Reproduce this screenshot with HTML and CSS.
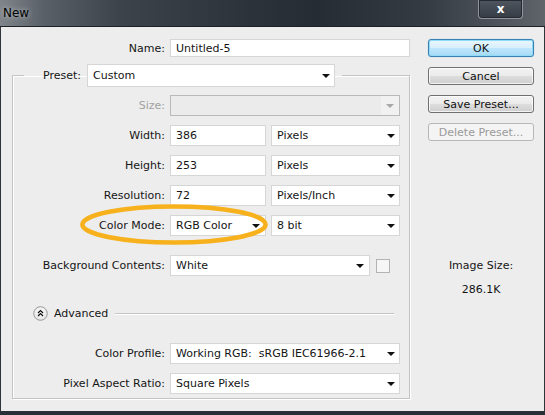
FILE: index.html
```html
<!DOCTYPE html>
<html>
<head>
<meta charset="utf-8">
<title>New</title>
<link rel="stylesheet" href="styles.css">
</head>
<body>
<div class="window">
  <div class="titlebar">
    <span class="title">New</span>
    <div class="close">x</div>
  </div>
  <div class="dialog">
    <div class="main">
      <div class="row name-row">
        <span class="lbl">Name:</span>
        <span class="field name-field">Untitled-5</span>
      </div>
      <fieldset class="group">
        <legend class="preset">
          <span class="preset-lbl">Preset:</span>
          <span class="select preset-sel">Custom<span class="arrow"></span></span>
        </legend>
        <div class="row first">
          <span class="lbl disabled-text">Size:</span>
          <span class="select size-sel disabled"><span class="arrow-box"><span class="arrow grey"></span></span></span>
        </div>
        <div class="row">
          <span class="lbl">Width:</span>
          <span class="field num">386</span>
          <span class="select unit">Pixels<span class="arrow"></span></span>
        </div>
        <div class="row">
          <span class="lbl">Height:</span>
          <span class="field num">253</span>
          <span class="select unit">Pixels<span class="arrow"></span></span>
        </div>
        <div class="row">
          <span class="lbl">Resolution:</span>
          <span class="field num">72</span>
          <span class="select unit">Pixels/Inch<span class="arrow"></span></span>
        </div>
        <div class="row mode-row">
          <span class="lbl">Color Mode:</span>
          <span class="select num">RGB Color<span class="arrow"></span></span>
          <span class="select unit">8 bit<span class="arrow"></span></span>
          <svg class="highlight" width="188" height="42" viewBox="0 0 188 42">
            <ellipse cx="94" cy="20.5" rx="91.6" ry="18" fill="none" stroke="#f6b11c" stroke-width="4.6"/>
          </svg>
        </div>
        <div class="row bg-row">
          <span class="lbl">Background Contents:</span>
          <span class="select bg-sel">White<span class="arrow"></span></span>
          <span class="checkbox"></span>
        </div>
        <div class="advanced">
          <svg class="adv-icon" width="15" height="15" viewBox="0 0 15 15">
            <defs>
              <radialGradient id="g" cx="0.5" cy="0.4" r="0.6">
                <stop offset="0" stop-color="#ffffff"/>
                <stop offset="1" stop-color="#e2e2e2"/>
              </radialGradient>
            </defs>
            <circle cx="7.5" cy="7.5" r="6.8" fill="url(#g)" stroke="#9a9a9a" stroke-width="1"/>
            <path d="M5 7 L7.5 4.6 L10 7 M5 10 L7.5 7.6 L10 10" fill="none" stroke="#111" stroke-width="1.3"/>
          </svg>
          <span class="adv-text">Advanced</span>
          <span class="adv-line"></span>
        </div>
        <div class="row profile-row">
          <span class="lbl">Color Profile:</span>
          <span class="select long">Working RGB:&nbsp; sRGB IEC61966-2.1<span class="arrow"></span></span>
        </div>
        <div class="row">
          <span class="lbl">Pixel Aspect Ratio:</span>
          <span class="select long">Square Pixels<span class="arrow"></span></span>
        </div>
      </fieldset>
    </div>
    <div class="side">
      <div class="btn default">OK</div>
      <div class="btn">Cancel</div>
      <div class="btn">Save Preset...</div>
      <div class="btn disabled">Delete Preset...</div>
      <div class="size-label">Image Size:</div>
      <div class="size-value">286.1K</div>
    </div>
  </div>
</div>
</body>
</html>
```
FILE: styles.css
```css
* { box-sizing: border-box; }
html, body { margin: 0; padding: 0; }
body {
  width: 545px;
  height: 415px;
  overflow: hidden;
  font-family: "DejaVu Sans", Tahoma, sans-serif;
  font-size: 11px;
  color: #151515;
  background: #ededed;
}
.window {
  width: 545px;
  height: 415px;
  display: flex;
  flex-direction: column;
}
.titlebar {
  height: 27px;
  flex: none;
  display: flex;
  align-items: flex-start;
  background: linear-gradient(90deg, #80858b 0%, #5a6067 8%, #3c434b 22%, #2c333b 45%, #262c33 58%, #353b43 78%, #50555c 92%, #5f646a 100%);
  border-bottom: 1px solid #1d2126;
}
.title {
  padding: 6px 0 0 3px;
  font-size: 12px;
  color: #000;
  text-shadow: 0 0 5px rgba(220, 225, 230, 0.9);
}
.close {
  margin-left: auto;
  margin-right: 22px;
  width: 45px;
  height: 19px;
  border: 1px solid #8f959b;
  border-top: none;
  border-radius: 0 0 4px 4px;
  background: linear-gradient(#505660, #363c44);
  box-shadow: inset 0 0 0 1px #252a30;
  color: #fff;
  font-weight: bold;
  font-size: 12px;
  display: flex;
  align-items: center;
  justify-content: center;
  padding-bottom: 1px;
}
.dialog {
  flex: 1;
  display: flex;
  align-items: flex-start;
  border-left: 1px solid #30353b;
  border-right: 1px solid #30353b;
  border-bottom: 4px solid #2a2f35;
  padding-top: 12px;
}
.main {
  width: 408px;
  flex: none;
}
.row {
  display: flex;
  align-items: center;
  height: 21px;
  position: relative;
}
.lbl {
  width: 169px;
  flex: none;
  text-align: right;
  padding-right: 5px;
  white-space: nowrap;
}
.name-row { height: 18px; }
.field, .select {
  height: 100%;
  background: #fff;
  border: 1px solid #d6d6d6;
  display: flex;
  align-items: center;
  padding-left: 5px;
  white-space: nowrap;
  position: relative;
  flex: none;
}
.name-field { width: 240px; }
.group {
  margin: 7px 0 0 11px;
  padding: 0 0 4px 0;
  width: 398px;
  border: 1px solid #c4c4c4;
  box-shadow: 1px 1px 0 #fff, inset 1px 1px 0 #fff;
  min-width: 0;
}
.preset {
  margin-left: 11px;
  padding: 0 7px 0 19px;
  display: flex;
  align-items: center;
  height: 23px;
}
.preset-lbl {
  width: 44px;
  flex: none;
}
.preset-sel {
  width: 248px;
}
.group .lbl { width: 157px; }
.first { margin-top: 8px; }
.group .row + .row { margin-top: 9px; }
.disabled-text { color: #a2a2a2; }
.size-sel { width: 230px; }
.select.disabled {
  background: #ebebeb;
  border-color: #b9b9b9;
  padding: 0;
  justify-content: flex-end;
}
.arrow-box {
  width: 18px;
  height: 100%;
  background: #f1f1f1;
  position: relative;
}
.arrow {
  position: absolute;
  right: 4px;
  top: 50%;
  margin-top: -2px;
  width: 0;
  height: 0;
  border-left: 4px solid transparent;
  border-right: 4px solid transparent;
  border-top: 4px solid #111;
}
.arrow.grey { border-top-color: #a8a8a8; right: 5px; }
.num { width: 96px; }
.unit { width: 129px; margin-left: 5px; }
.num .arrow, .bg-sel .arrow { right: 5px; }
.group .row.bg-row { margin-top: 19px; }
.bg-sel { width: 200px; }
.checkbox {
  width: 14px;
  height: 14px;
  margin-left: 6px;
  border: 1px solid #b3b3b3;
  background: #f6f6f6;
  flex: none;
}
.highlight {
  position: absolute;
  left: 67px;
  top: -11px;
  pointer-events: none;
}
.advanced {
  display: flex;
  align-items: center;
  height: 15px;
  margin: 30px 15px 0 20px;
}
.adv-icon { flex: none; display: block; }
.adv-text { margin-left: 6px; }
.adv-line {
  flex: 1;
  height: 2px;
  margin-left: 7px;
  border-top: 1px solid #c4c4c4;
  border-bottom: 1px solid #fff;
}
.group .row.profile-row { margin-top: 22px; }
.long { width: 230px; }
.side {
  width: 106px;
  margin-left: 19px;
  flex: none;
  display: flex;
  flex-direction: column;
}
.btn {
  height: 18px;
  margin-bottom: 10px;
  border: 1px solid #707070;
  border-radius: 3px;
  background: linear-gradient(#f3f3f3 0%, #ebebeb 48%, #dddddd 52%, #cfcfcf 100%);
  box-shadow: inset 0 0 0 1px rgba(255, 255, 255, 0.75);
  display: flex;
  align-items: center;
  justify-content: center;
  color: #111;
}
.btn.default {
  border-color: #3c7fb1;
  background: linear-gradient(#e8f6fd 0%, #d8effc 48%, #bde6fd 52%, #a6d9f4 100%);
  box-shadow: inset 0 0 0 1px #8fdcf8, 0 0 1px #5ec3ec;
}
.btn.disabled {
  border-color: #b4b8bb;
  background: #f4f4f4;
  box-shadow: none;
  color: #9a9a9a;
}
.size-label {
  margin-top: 108px;
  line-height: 14px;
  text-align: center;
}
.size-value {
  margin-top: 10px;
  line-height: 14px;
  text-align: center;
}
```
